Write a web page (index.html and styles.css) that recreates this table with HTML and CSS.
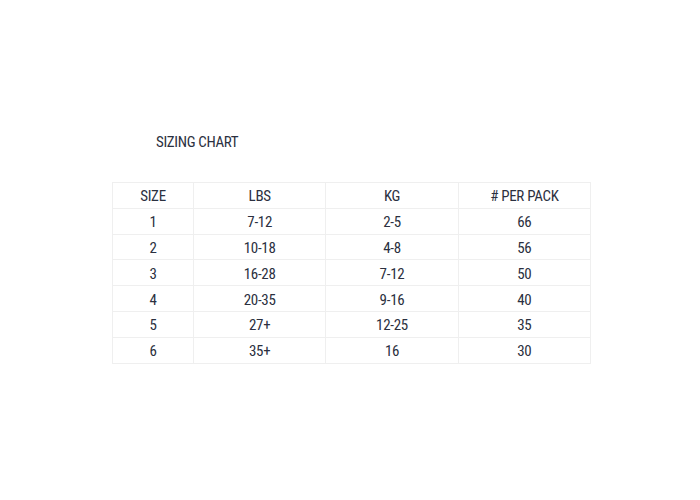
FILE: index.html
```html
<!DOCTYPE html>
<html>
<head>
<meta charset="utf-8">
<link rel="stylesheet" href="styles.css">
</head>
<body>
<main class="page">
  <h2 class="title">SIZING CHART</h2>
  <table class="chart">
    <thead>
      <tr><th class="c-size">SIZE</th><th>LBS</th><th>KG</th><th># PER PACK</th></tr>
    </thead>
    <tbody>
      <tr><td>1</td><td>7-12</td><td>2-5</td><td>66</td></tr>
      <tr><td>2</td><td>10-18</td><td>4-8</td><td>56</td></tr>
      <tr><td>3</td><td>16-28</td><td>7-12</td><td>50</td></tr>
      <tr><td>4</td><td>20-35</td><td>9-16</td><td>40</td></tr>
      <tr><td>5</td><td>27+</td><td>12-25</td><td>35</td></tr>
      <tr><td>6</td><td>35+</td><td>16</td><td>30</td></tr>
    </tbody>
  </table>
</main>
</body>
</html>
```
FILE: styles.css
```css
html, body {
  margin: 0;
  padding: 0;
  background: #ffffff;
}
.page {
  padding: 133px 0 0 112px;
  font-family: "Roboto Condensed", "Liberation Sans Narrow", "DejaVu Sans Condensed", Roboto, sans-serif;
  color: #2b3040;
}
.title {
  margin: 0 0 31px 44px;
  font-size: 15px;
  font-weight: 400;
  line-height: 18px;
  letter-spacing: -0.35px;
}
.chart {
  border-collapse: collapse;
  width: 479px;
  table-layout: fixed;
  font-size: 15px;
  letter-spacing: -0.3px;
}
.chart th, .chart td {
  border: 1px solid #efefef;
  height: 22.8px;
  padding: 2px 0 0;
  text-align: center;
  font-weight: 400;
  vertical-align: middle;
}
.chart th.c-size {
  width: 80px;
}
```
